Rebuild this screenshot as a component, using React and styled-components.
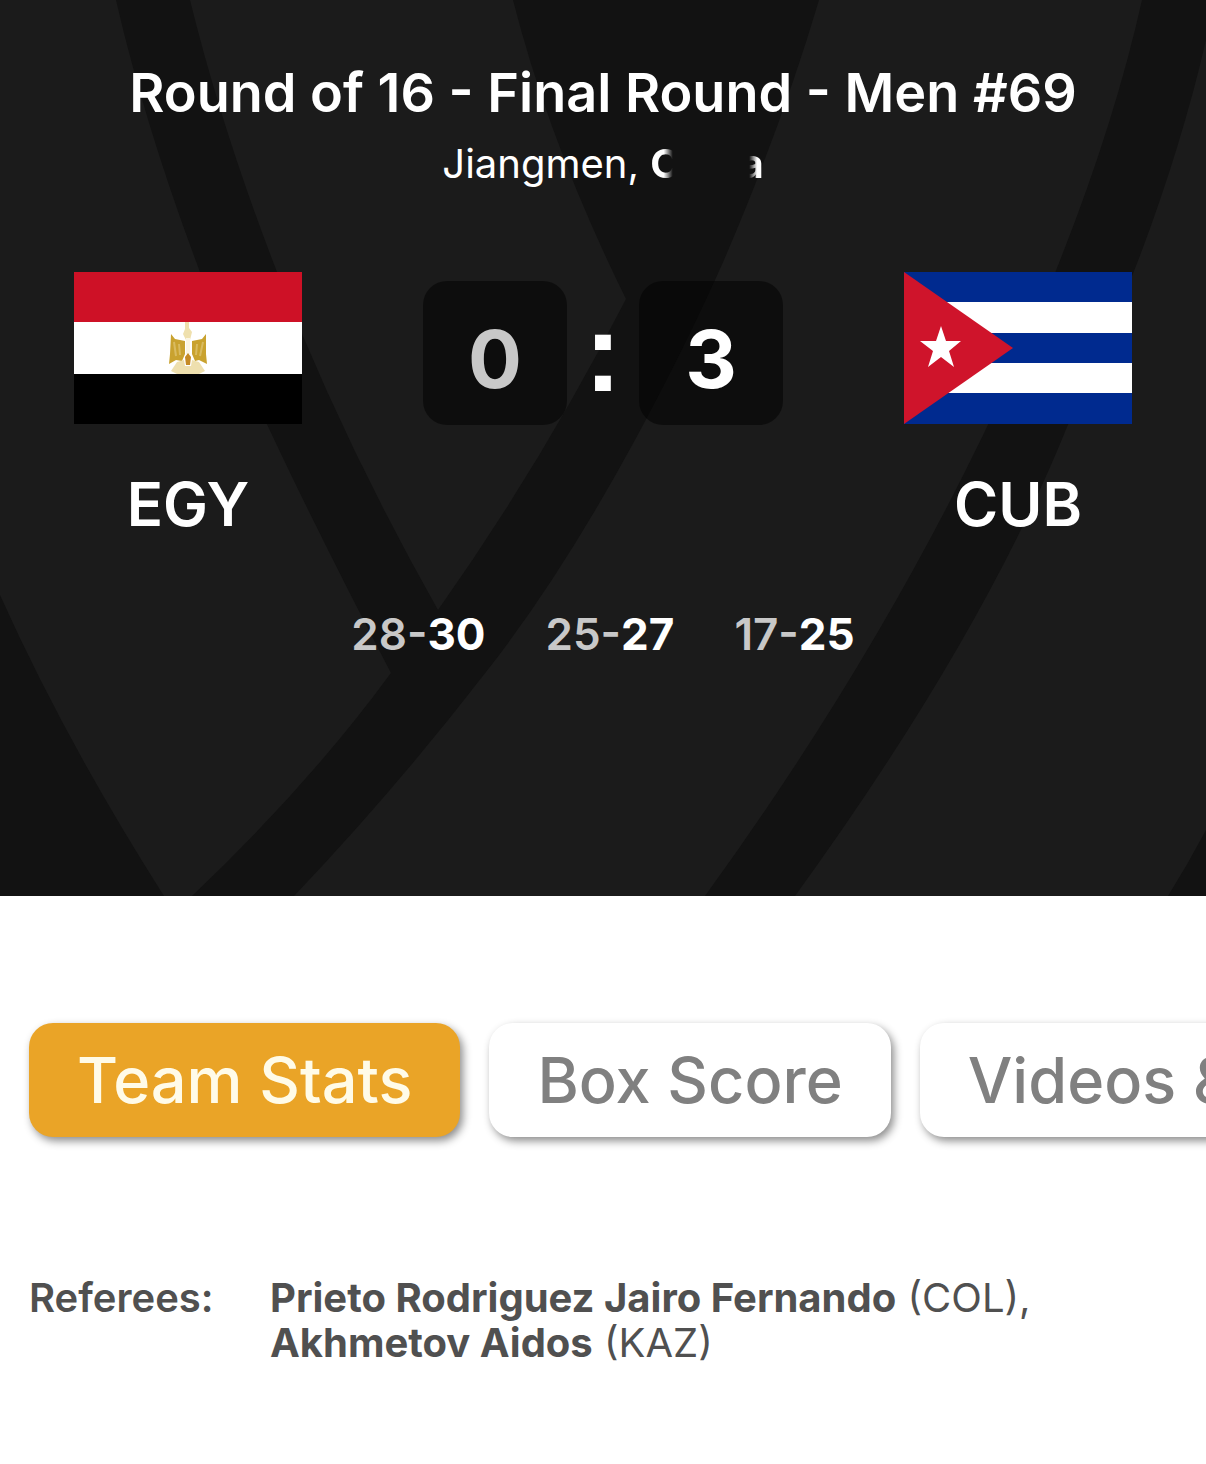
import React from "react";
import styled, { createGlobalStyle } from "styled-components";

const GlobalStyle = createGlobalStyle`
  *, *::before, *::after { box-sizing: border-box; }
  body {
    margin: 0;
    background: #fff;
    font-family: Inter, "Liberation Sans", Arial, sans-serif;
  }
`;

const Hero = styled.header`
  position: relative;
  isolation: isolate;
  overflow: hidden;
  padding: 60px 74px 238px;
  background: #1b1b1b;
  color: #fff;
`;

const Backdrop = styled.svg`
  position: absolute;
  inset: 0;
  z-index: -1;
  width: 100%;
  height: 100%;
  fill: #121212;
`;

const Title = styled.h1`
  margin: 0 -10px;
  font-size: 54px;
  font-weight: 600;
  line-height: 66px;
  text-align: center;
`;

const Venue = styled.p`
  margin: 14px 0 0;
  font-size: 40px;
  line-height: 48px;
  text-align: center;
`;

const Country = styled.b`
  font-weight: 700;
  mask-image: linear-gradient(to right, #000 12%, transparent 20%, transparent 87%, #000 94%);
`;

const Match = styled.section`
  display: flex;
  justify-content: space-between;
  align-items: flex-start;
  margin-top: 84px;
`;

const Team = styled.div`
  display: flex;
  flex-direction: column;
  align-items: center;
  gap: 44px;
`;

const Flag = styled.svg`
  display: block;
  width: 228px;
  height: 152px;
`;

const TeamCode = styled.h2`
  margin: 0;
  font-size: 60px;
  font-weight: 600;
  line-height: 72px;
`;

const Score = styled.div`
  display: flex;
  align-items: flex-start;
  margin-top: 9px;
  font-size: 80px;
  font-weight: 700;
  line-height: 144px;
`;

const Points = styled.span`
  width: 144px;
  padding-top: 6px;
  height: 144px;
  border-radius: 24px;
  background: rgba(0, 0, 0, 0.5);
  color: ${(p) => (p.$won ? "#fff" : "#c8c8c8")};
  text-align: center;
`;

const Colon = styled.span`
  width: 72px;
  font-family: "Liberation Sans", Arial, sans-serif;
  font-size: 112px;
  text-align: center;
`;

const Sets = styled.ul`
  display: flex;
  justify-content: center;
  gap: 60px;
  margin: 70px 0 0;
  padding: 0;
  list-style: none;
  font-size: 44px;
  font-weight: 600;
  line-height: 48px;
  color: #c8c8c8;
`;

const SetWon = styled.b`
  font-weight: 700;
  color: #fff;
`;

const Tabs = styled.nav`
  display: flex;
  gap: 29px;
  margin-top: 107px;
  padding: 20px 29px;
  overflow-x: auto;
  scrollbar-width: none;
`;

const Tab = styled.button`
  flex: none;
  padding: 17px 48px;
  border: 0;
  border-radius: 24px;
  background: ${(p) => (p.$active ? "#eaa427" : "#fff")};
  color: ${(p) => (p.$active ? "#fffbe8" : "#808080")};
  box-shadow: 3px 4px 8px rgba(0, 0, 0, 0.45);
  font: inherit;
  font-size: 63px;
  font-weight: 500;
  line-height: 80px;
  white-space: nowrap;
  cursor: pointer;
`;

const Officials = styled.dl`
  display: grid;
  grid-template-columns: 241px 1fr;
  margin: 0;
  padding: 118px 29px 98px;
  color: #505050;
  font-size: 40px;
  line-height: 45px;
`;

const Label = styled.dt`
  font-weight: 600;
`;

const Names = styled.dd`
  margin: 0;
`;

const Person = styled.div`
  b { font-weight: 700; }
`;

function EgyptFlag() {
  return (
    <Flag viewBox="0 0 228 152" role="img" aria-label="Egypt">
      <rect width="228" height="152" fill="#fff" />
      <rect width="228" height="50" fill="#ce1126" />
      <rect y="102" width="228" height="50" fill="#000" />
      <path d="M111 50h4v6l3 4-2 8h-4l-3-6 2-5z" fill="#efe0ad" />
      <path d="M97 62l4 5 10 2v13l-3 7-6-1-7 4 1-10zM132 62l-4 5-10 2v13l3 7 4-1 8 4-1-10z" fill="#c9a22f" />
      <path d="M100 70l2 14M105 72l1 11M129 70l-3 14M123 72l-1 11" stroke="#d9bb60" strokeWidth="2" />
      <path d="M112 66h4v16h-4z" fill="#fbf5e2" />
      <path d="M103 90l7-2 1 6h6l1-6 7 2 6 9-6 3h-22l-6-3z" fill="#eedfae" />
      <path d="M111 85l3-4 3 4-1 8h-4z" fill="#c58a25" />
    </Flag>
  );
}

function CubaFlag() {
  return (
    <Flag viewBox="0 0 228 152" role="img" aria-label="Cuba">
      <rect width="228" height="152" fill="#002a8f" />
      <path d="M0 30h228v31H0zM0 91h228v30H0z" fill="#fff" />
      <path d="M0 0l109 76L0 152z" fill="#cf142b" />
      <path d="M37 54l5 15h15l-12 10 5 16-13-10-13 10 5-16-13-10h16z" fill="#fff" />
    </Flag>
  );
}

const sets = [
  ["28", "30"],
  ["25", "27"],
  ["17", "25"],
];

const referees = [
  { name: "Prieto Rodriguez Jairo Fernando", from: "(COL)," },
  { name: "Akhmetov Aidos", from: "(KAZ)" },
];

const tabs = ["Team Stats", "Box Score", "Videos &"];

export default function App() {
  const [active, setActive] = React.useState(tabs[0]);

  return (
    <>
      <GlobalStyle />
      <Hero>
        <Backdrop viewBox="0 0 1206 896" preserveAspectRatio="xMidYMid slice" aria-hidden="true">
          <path d="M116 0Q145 126 200 272Q265 432 391 673Q308 786 192 896H294Q395 790 486 672Q560 578 635 440Q686 346 724 260Q783 122 819 0H513Q550 145 626 299Q542 463 438 610Q343 442 277 272Q222 130 190 0Z" />
          <path d="M1142 0Q1114 126 1055 273Q927 590 705 896H795Q982 638 1067 427Q1164 222 1206 40V0Z" />
          <path d="M0 595Q66 742 164 896H0ZM1206 830Q1188 864 1168 896H1206Z" />
        </Backdrop>
        <Title>Round of 16 - Final Round - Men #69</Title>
        <Venue>
          Jiangmen, <Country>China</Country>
        </Venue>
        <Match>
          <Team>
            <EgyptFlag />
            <TeamCode>EGY</TeamCode>
          </Team>
          <Score>
            <Points>0</Points>
            <Colon>:</Colon>
            <Points $won>3</Points>
          </Score>
          <Team>
            <CubaFlag />
            <TeamCode>CUB</TeamCode>
          </Team>
        </Match>
        <Sets>
          {sets.map(([home, away]) => (
            <li key={home}>
              {home}-<SetWon>{away}</SetWon>
            </li>
          ))}
        </Sets>
      </Hero>
      <main>
        <Tabs>
          {tabs.map((name) => (
            <Tab key={name} type="button" $active={name === active} onClick={() => setActive(name)}>
              {name}
            </Tab>
          ))}
        </Tabs>
        <Officials>
          <Label>Referees:</Label>
          <Names>
            {referees.map(({ name, from }) => (
              <Person key={name}>
                <b>{name}</b> {from}
              </Person>
            ))}
          </Names>
        </Officials>
      </main>
    </>
  );
}
